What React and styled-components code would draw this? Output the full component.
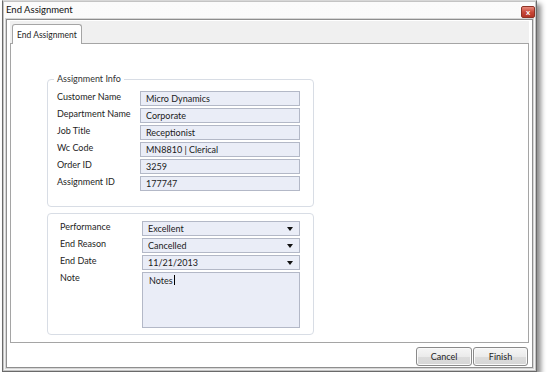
import React from 'react';
import styled, { createGlobalStyle } from 'styled-components';

const GlobalStyle = createGlobalStyle`
  html, body {
    margin: 0;
    padding: 0;
    background: #ffffff;
  }
  body {
    font-family: Lato, "Open Sans", sans-serif;
    font-size: 9px;
    color: #1e1e1e;
  }
`;

const Window = styled.div`
  box-sizing: border-box;
  margin-left: 2px;
  width: 535px;
  height: 372px;
  display: flex;
  flex-direction: column;
  background: linear-gradient(#fbfbfb, #f3f3f3);
  border: 1px solid #6a6a6a;
  border-top-color: #d8d8d8;
  box-shadow: inset 0 0 0 1px #c4c4c4, 4px 4px 5px rgba(0, 0, 0, 0.45);
`;

const TitleBar = styled.div`
  height: 17px;
  display: flex;
  align-items: center;
  justify-content: space-between;
  padding: 0 1px 0 3px;
  font-size: 9.5px;
  color: #111;
`;

const CloseButton = styled.div`
  box-sizing: border-box;
  width: 14px;
  height: 12px;
  margin-top: 4px;
  border: 1px solid #8d3326;
  border-radius: 2px;
  background: linear-gradient(#e88a7c, #c9493a 50%, #b43526);
  display: flex;
  align-items: center;
  justify-content: center;
  color: #fff;
  font-size: 8px;
  font-weight: bold;
  line-height: 1;
`;

const Frame = styled.div`
  flex: 1;
  margin: 1px 3px 3px 3px;
  display: flex;
  flex-direction: column;
  padding: 1px 3px 0 3px;
  background: #ffffff;
  border: 1px solid #8e8e8e;
  box-shadow: 0 0 0 1px #d6d6d6;
`;

const TabStrip = styled.div`
  height: 22px;
  display: flex;
  align-items: flex-end;
  padding-left: 2px;
  background: #f0f0f0;
`;

const Tab = styled.div`
  box-sizing: border-box;
  height: 20px;
  margin-bottom: -1px;
  padding: 0 4px;
  display: flex;
  align-items: center;
  background: #ffffff;
  border: 1px solid #a5a5a5;
  border-bottom: none;
  border-radius: 3px 3px 0 0;
  position: relative;
  z-index: 1;
  font-size: 8.5px;
`;

const Panel = styled.div`
  box-sizing: border-box;
  height: 300px;
  padding: 35px 0 0 36px;
  display: flex;
  flex-direction: column;
  gap: 6px;
  border: 1px solid #a5a5a5;
  background: #ffffff;
`;

const GroupBox = styled.div`
  box-sizing: border-box;
  position: relative;
  width: 267px;
  height: ${(p) => p.h}px;
  padding: ${(p) => p.pad};
  border: 1px solid #d8dde5;
  border-radius: 4px;
`;

const Legend = styled.span`
  position: absolute;
  top: -7px;
  left: 6px;
  padding: 0 3px;
  background: #ffffff;
  line-height: 12px;
  color: #333;
`;

const Form = styled.div`
  display: grid;
  grid-template-columns: ${(p) => p.labelW}px 1fr;
  grid-auto-rows: 15px;
  grid-template-rows: ${(p) => p.rows || 'none'};
  row-gap: 2px;
`;

const Label = styled.div`
  line-height: 11px;
  white-space: nowrap;
`;

const Field = styled.div`
  box-sizing: border-box;
  height: 15px;
  display: flex;
  align-items: center;
  justify-content: space-between;
  padding: 0 5px;
  border: 1px solid #b3b8c7;
  background: #eaedf7;
  color: #1a1a1a;
`;

const Arrow = styled.svg`
  width: 6px;
  height: 4px;
  margin-right: 1px;
`;

const NoteArea = styled.div`
  box-sizing: border-box;
  height: 56px;
  padding: 1px 6px;
  border: 1px solid #b3b8c7;
  background: #eaedf7;
  line-height: 13px;
`;

const Caret = styled.span`
  display: inline-block;
  width: 1px;
  height: 10px;
  margin-left: 1px;
  vertical-align: -1px;
  background: #000;
`;

const ButtonRow = styled.div`
  display: flex;
  justify-content: flex-end;
  gap: 1px;
  padding: 4px 1px 0 0;
`;

const Button = styled.button`
  box-sizing: border-box;
  width: ${(p) => p.w}px;
  height: 19px;
  padding: 0;
  border: 1px solid #8a8a8a;
  border-radius: 3px;
  background: linear-gradient(#f6f6f6, #ebebeb 50%, #dcdcdc 51%, #d6d6d6);
  box-shadow: inset 0 0 0 1px #fafafa;
  font-family: inherit;
  font-size: 9px;
  color: #1e1e1e;
`;

const infoRows = [
  ['Customer Name', 'Micro Dynamics'],
  ['Department Name', 'Corporate'],
  ['Job Title', 'Receptionist'],
  ['Wc Code', 'MN8810 | Clerical'],
  ['Order ID', '3259'],
  ['Assignment ID', '177747'],
];

const selectRows = [
  ['Performance', 'Excellent'],
  ['End Reason', 'Cancelled'],
  ['End Date', '11/21/2013'],
];

const DropArrow = () => (
  <Arrow viewBox="0 0 6 4">
    <path d="M0 0 H6 L3 4 Z" fill="#111" />
  </Arrow>
);

export default function App() {
  return (
    <>
      <GlobalStyle />
      <Window>
        <TitleBar>
          <span>End Assignment</span>
          <CloseButton>x</CloseButton>
        </TitleBar>
        <Frame>
          <TabStrip>
            <Tab>End Assignment</Tab>
          </TabStrip>
          <Panel>
            <GroupBox h={128} pad="11px 13px 0 9px">
              <Legend>Assignment Info</Legend>
              <Form labelW={83}>
                {infoRows.map(([label, value]) => (
                  <React.Fragment key={label}>
                    <Label>{label}</Label>
                    <Field>{value}</Field>
                  </React.Fragment>
                ))}
              </Form>
            </GroupBox>
            <GroupBox h={122} pad="7px 13px 0 12px">
              <Form labelW={82} rows="15px 15px 15px 56px">
                {selectRows.map(([label, value]) => (
                  <React.Fragment key={label}>
                    <Label>{label}</Label>
                    <Field>
                      <span>{value}</span>
                      <DropArrow />
                    </Field>
                  </React.Fragment>
                ))}
                <Label>Note</Label>
                <NoteArea>
                  Notes
                  <Caret />
                </NoteArea>
              </Form>
            </GroupBox>
          </Panel>
          <ButtonRow>
            <Button w={56}>Cancel</Button>
            <Button w={55}>Finish</Button>
          </ButtonRow>
        </Frame>
      </Window>
    </>
  );
}
